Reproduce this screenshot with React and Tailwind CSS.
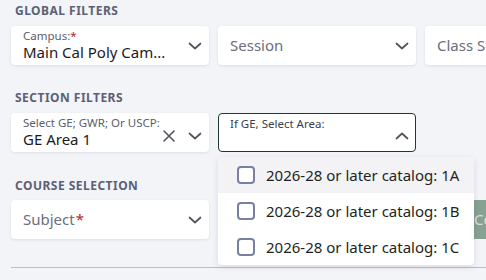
import React from "react";

const Chevron = ({ up = false }) => (
  <svg width="14" height="14" viewBox="0 0 14 14" fill="none" className="shrink-0">
    <path
      d={up ? "M1.5 9.5 L7 4.5 L12.5 9.5" : "M1.5 4.5 L7 9.5 L12.5 4.5"}
      stroke="#50535d"
      strokeWidth="1.7"
      strokeLinecap="round"
      strokeLinejoin="round"
    />
  </svg>
);

const XIcon = () => (
  <svg width="14" height="14" viewBox="0 0 14 14" fill="none" className="shrink-0">
    <path d="M2 2 L12 12 M12 2 L2 12" stroke="#50535d" strokeWidth="1.6" strokeLinecap="round" />
  </svg>
);

const Heading = ({ children, className = "" }) => (
  <div
    className={
      "pl-[4px] h-[16px] leading-[16px] text-[12px] font-bold tracking-[0.04em] text-[#5d6073] uppercase " +
      className
    }
  >
    {children}
  </div>
);

const Box = ({ children, className = "" }) => (
  <div
    className={
      "h-[39px] bg-white rounded-[4px] shadow-[0_1px_3px_rgba(30,40,70,0.10)] flex items-center pl-[12px] pr-[7px] " +
      className
    }
  >
    {children}
  </div>
);

const CheckItem = ({ label, hover }) => (
  <div className={"h-[36px] flex items-center pl-[19px] " + (hover ? "bg-[#f3f3f5]" : "")}>
    <div className="w-[18px] h-[18px] rounded-[4px] border-2 border-[#7a7fa4] bg-white shrink-0" />
    <span className="ml-[11px] text-[15px] text-[#1f1f24]">{label}</span>
  </div>
);

export default function App() {
  return (
    <div
      className="w-[486px] h-[280px] overflow-hidden bg-[#f3f4f8] relative"
      style={{ fontFamily: '"Noto Sans", "Open Sans", sans-serif' }}
    >
      <div className="pl-[11px] pt-[3px]">
        <Heading>Global Filters</Heading>
        <div className="mt-[7px] flex gap-[9px]">
          <Box className="w-[198px] shrink-0">
            <div className="flex-1 min-w-0 flex flex-col">
              <div className="text-[11.5px] leading-[13px] text-[#5b5e6b]">
                Campus:<span className="text-[#b3262b]">*</span>
              </div>
              <div className="text-[15px] leading-[20px] text-[#1a1a1f] whitespace-nowrap">
                Main Cal Poly Cam...
              </div>
            </div>
            <Chevron />
          </Box>
          <Box className="w-[198px] shrink-0">
            <div className="flex-1 text-[15px] text-[#6b6e7b]">Session</div>
            <Chevron />
          </Box>
          <Box className="w-[198px] shrink-0">
            <div className="flex-1 text-[15px] text-[#6b6e7b] whitespace-nowrap">Class Status</div>
            <Chevron />
          </Box>
        </div>

        <Heading className="mt-[25px]">Section Filters</Heading>
        <div className="mt-[7px] flex gap-[9px]">
          <Box className="w-[198px] shrink-0">
            <div className="flex-1 min-w-0 flex flex-col">
              <div className="text-[11.5px] leading-[13px] text-[#5b5e6b] whitespace-nowrap">
                Select GE; GWR; Or USCP:
              </div>
              <div className="text-[15px] leading-[20px] text-[#1a1a1f]">GE Area 1</div>
            </div>
            <div className="flex items-center gap-[12px] mt-[6px]">
              <XIcon />
              <Chevron />
            </div>
          </Box>
          <div className="w-[198px] h-[39px] shrink-0 bg-white rounded-[4px] border border-[#1d3a2c] flex pl-[11px] pr-[6px]">
            <div className="flex-1 pt-[3px] text-[11.5px] leading-[13px] text-[#3b3e48]">
              If GE, Select Area:
            </div>
            <div className="flex items-center mt-[6px]">
              <Chevron up />
            </div>
          </div>
        </div>

        <Heading className="mt-[26px]">Course Selection</Heading>
        <div className="mt-[6px] flex gap-[9px]">
          <Box className="w-[198px] shrink-0">
            <div className="flex-1 text-[15px] text-[#6b6e7b]">
              Subject<span className="ml-[1px] text-[#b3262b]">*</span>
            </div>
            <Chevron />
          </Box>
          <div className="w-[198px] shrink-0" />
          <div className="w-[198px] h-[39px] shrink-0 rounded-[4px] bg-[#87a193] flex items-center pl-[49px] text-[15px] text-[#d4e0d8] whitespace-nowrap">
            Compare
          </div>
        </div>

        <div className="mt-[28px] h-px bg-[#b9bccb]" />
      </div>

      <div className="absolute left-[218px] top-[157px] w-[256px] bg-white rounded-[4px] shadow-[0_2px_6px_rgba(30,40,70,0.12)] overflow-hidden">
        <CheckItem label="2026-28 or later catalog: 1A" hover />
        <CheckItem label="2026-28 or later catalog: 1B" />
        <CheckItem label="2026-28 or later catalog: 1C" />
      </div>
    </div>
  );
}
